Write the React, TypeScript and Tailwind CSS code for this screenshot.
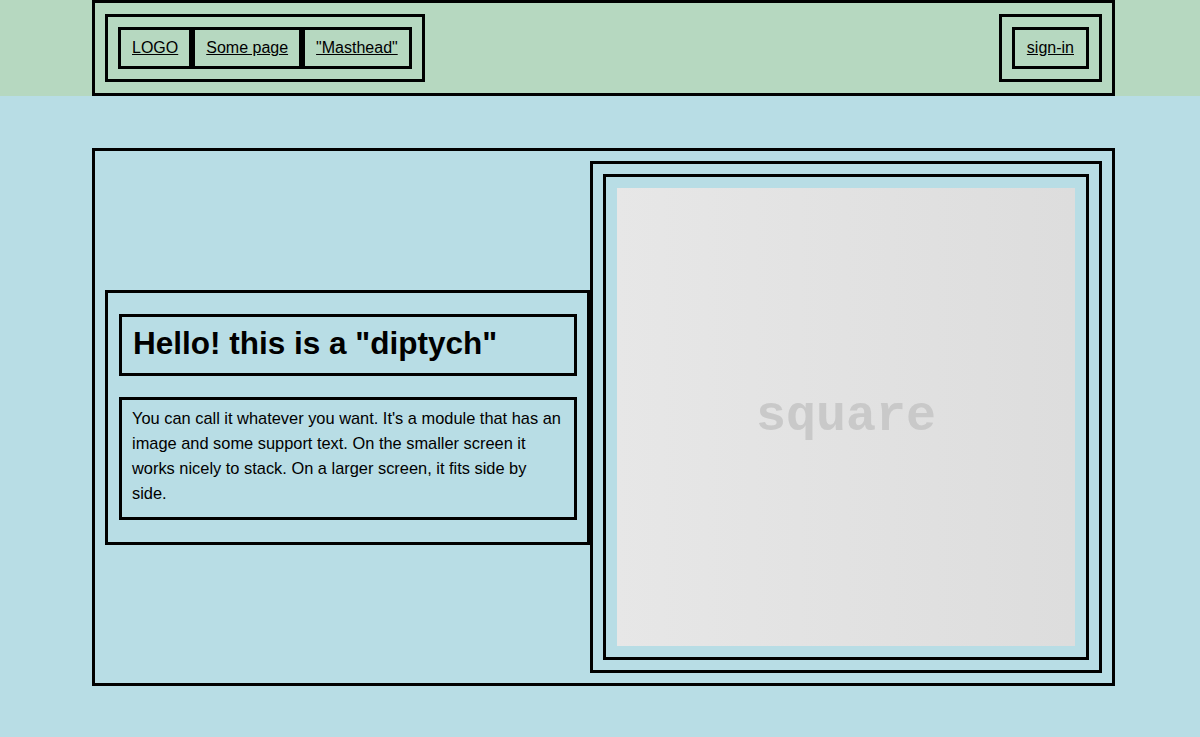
import React from 'react'

// 顶部导航链接
const navLinks = ['LOGO', 'Some page', '"Masthead"']

export default function App() {
  return (
    <div className="min-h-[737px] bg-[#b8dde5] text-black font-['Liberation_Sans',Arial,sans-serif]">
      {/* 顶部栏 */}
      <header className="bg-[#b6d8c0]">
        <div className="ml-[92px] w-[1023px] h-[96px] border-[3px] border-black px-[10px] py-[11px] flex items-start justify-between">
          <nav className="flex border-[3px] border-black p-[10px]">
            {navLinks.map((label) => (
              <a key={label} href="#" className="border-[3px] border-black px-[11px] py-[10px] text-[16px] leading-4 underline">
                {label}
              </a>
            ))}
          </nav>
          <div className="flex border-[3px] border-black p-[10px]">
            <a href="#" className="border-[3px] border-black px-[12px] py-[10px] text-[16px] leading-4 underline">
              sign-in
            </a>
          </div>
        </div>
      </header>

      {/* 双联模块 */}
      <main className="pt-[52px]">
        <section className="ml-[92px] w-[1023px] border-[3px] border-black p-[10px] flex items-center">
          <div className="flex-1 border-[3px] border-black pl-[11px] pr-[10px] pt-[21px] pb-[22px] flex flex-col gap-[21px]">
            <h2 className="border-[3px] border-black px-[11px] pt-[11px] pb-[14px] text-[31.5px] leading-[31px] font-bold">
              Hello! this is a "diptych"
            </h2>
            <p className="border-[3px] border-black pl-[10px] pr-[12px] pt-[6px] pb-[11px] text-[16.4px] leading-[25px]">
              You can call it whatever you want. It's a module that has an image and some support text. On the smaller screen it works nicely to stack. On a larger screen, it fits side by side.
            </p>
          </div>
          <div className="w-[512px] border-[3px] border-black p-[10px]">
            <div className="border-[3px] border-black p-[11px]">
              <div className="aspect-square w-full bg-gradient-to-r from-[#e7e7e7] to-[#dddddd] flex items-center justify-center">
                <span className="font-['Liberation_Mono','Courier_New',monospace] font-bold text-[50px] leading-none text-[#c9c9c9]">
                  square
                </span>
              </div>
            </div>
          </div>
        </section>
      </main>
    </div>
  )
}
